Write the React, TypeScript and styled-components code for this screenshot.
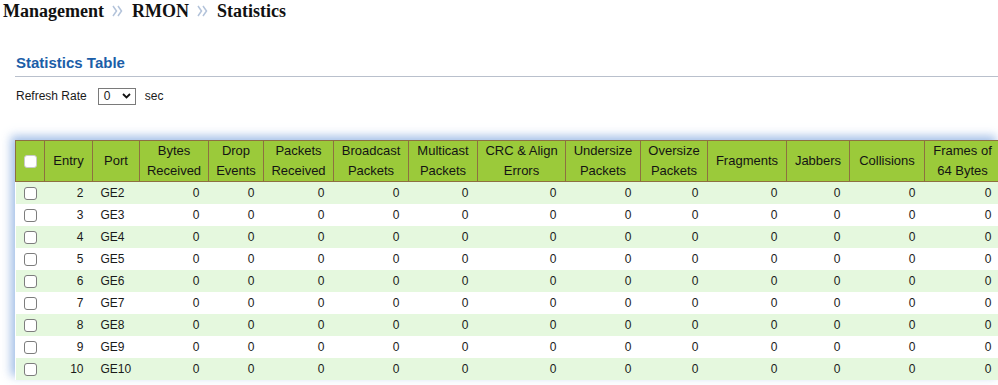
import styled, { createGlobalStyle } from "styled-components";

const GlobalStyle = createGlobalStyle`
  html, body {
    margin: 0;
    padding: 0;
    background: #ffffff;
    overflow: hidden;
  }
  body {
    font-family: "Liberation Sans", Arial, sans-serif;
    color: #1a1a1a;
  }
`;

const Page = styled.div`
  width: 998px;
  height: 385px;
  overflow: hidden;
`;

const Breadcrumb = styled.div`
  display: flex;
  align-items: center;
  gap: 7px;
  height: 22px;
  padding: 0 0 0 3px;
  font-family: "Liberation Serif", "Times New Roman", serif;
  font-weight: 700;
  font-size: 18px;
  color: #111;
`;

const Crumb = styled.span`
  line-height: 22px;
`;

const Section = styled.div`
  padding: 32px 0 0 15px;
`;

const SectionTitle = styled.div`
  font-size: 15px;
  font-weight: 700;
  color: #1b5ea8;
  line-height: 18px;
  padding: 0 0 4px 1px;
  border-bottom: 1px solid #b9c0cc;
`;

const RefreshRow = styled.div`
  display: flex;
  align-items: center;
  height: 20px;
  margin: 9px 0 0 1px;
  font-size: 12px;
  color: #1a1a1a;
`;

const RateSelect = styled.div`
  display: flex;
  align-items: center;
  justify-content: space-between;
  box-sizing: border-box;
  width: 38px;
  height: 17px;
  margin: 0 9px 0 11px;
  padding: 0 4px 0 5px;
  border: 1px solid #7a7a7a;
  font-size: 12px;
`;

const TableWrap = styled.div`
  margin-top: 34px;
  box-shadow: -4px -4px 9px 0 rgba(140, 175, 225, 0.8);
  width: 985px;
`;

const Table = styled.table`
  table-layout: fixed;
  width: 985px;
  border-collapse: collapse;
  font-size: 12px;
`;

const HeadCell = styled.th`
  background: #9bca3a;
  border: 1px solid #8d7040;
  font-weight: 400;
  font-size: 13px;
  color: #141414;
  line-height: 20px;
  height: 40px;
  padding: 0 1px;
  text-align: center;
  white-space: nowrap;
  overflow: hidden;
`;

const Row = styled.tr<{ $alt: boolean }>`
  background: ${(p) => (p.$alt ? "#e5f8de" : "#ffffff")};
`;

const Cell = styled.td<{ $align?: "left" | "right" | "center" }>`
  height: 22px;
  padding: 0 9px 0 8px;
  text-align: ${(p) => p.$align ?? "right"};
  color: #1a1a1a;
  white-space: nowrap;
`;

const Box = styled.span<{ $head?: boolean }>`
  display: inline-block;
  vertical-align: middle;
  box-sizing: border-box;
  width: 13px;
  height: 13px;
  border-radius: 3px;
  border: 1px solid ${(p) => (p.$head ? "#c9c9c9" : "#7d7d7d")};
  background: #ffffff;
`;

function Chevrons() {
  return (
    <svg width="14" height="14" viewBox="0 0 14 14" aria-hidden>
      <polyline points="2,2 5.5,7 2,12" fill="none" stroke="#b3c3da" strokeWidth="1.5" />
      <polyline points="7,2 10.5,7 7,12" fill="none" stroke="#b3c3da" strokeWidth="1.5" />
    </svg>
  );
}

function Caret() {
  return (
    <svg width="9" height="6" viewBox="0 0 9 6" aria-hidden>
      <polyline points="1,1 4.5,4.5 8,1" fill="none" stroke="#111" strokeWidth="1.8" />
    </svg>
  );
}

const widths = [29, 48, 47, 69, 55, 70, 75, 69, 88, 75, 67, 79, 63, 75, 76];

const headers: string[][] = [
  ["Entry"],
  ["Port"],
  ["Bytes", "Received"],
  ["Drop", "Events"],
  ["Packets", "Received"],
  ["Broadcast", "Packets"],
  ["Multicast", "Packets"],
  ["CRC & Align", "Errors"],
  ["Undersize", "Packets"],
  ["Oversize", "Packets"],
  ["Fragments"],
  ["Jabbers"],
  ["Collisions"],
  ["Frames of", "64 Bytes"],
];

const entries = [2, 3, 4, 5, 6, 7, 8, 9, 10];
const counters = 12;

export default function App() {
  return (
    <Page>
      <GlobalStyle />
      <Breadcrumb>
        <Crumb>Management</Crumb>
        <Chevrons />
        <Crumb>RMON</Crumb>
        <Chevrons />
        <Crumb>Statistics</Crumb>
      </Breadcrumb>

      <Section>
        <SectionTitle>Statistics Table</SectionTitle>
        <RefreshRow>
          Refresh Rate
          <RateSelect>
            <span>0</span>
            <Caret />
          </RateSelect>
          sec
        </RefreshRow>

        <TableWrap>
          <Table>
            <colgroup>
              {widths.map((w, i) => (
                <col key={i} style={{ width: w }} />
              ))}
            </colgroup>
            <thead>
              <tr>
                <HeadCell>
                  <Box $head />
                </HeadCell>
                {headers.map((h, i) => (
                  <HeadCell key={i}>
                    {h.map((line, j) => (
                      <div key={j}>{line}</div>
                    ))}
                  </HeadCell>
                ))}
              </tr>
            </thead>
            <tbody>
              {entries.map((n, i) => (
                <Row key={n} $alt={i % 2 === 0}>
                  <Cell $align="center" style={{ padding: 0 }}>
                    <Box />
                  </Cell>
                  <Cell>{n}</Cell>
                  <Cell $align="left">GE{n}</Cell>
                  {Array.from({ length: counters }).map((_, k) => (
                    <Cell key={k}>0</Cell>
                  ))}
                </Row>
              ))}
            </tbody>
          </Table>
        </TableWrap>
      </Section>
    </Page>
  );
}
